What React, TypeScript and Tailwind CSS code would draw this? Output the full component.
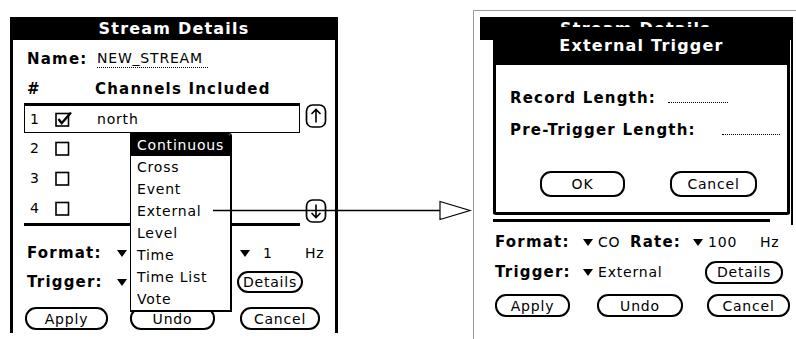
import React from "react";

const bold = "font-['DejaVu_Sans',sans-serif] font-bold text-[15px] tracking-[1.2px] leading-none";
const reg = "font-['DejaVu_Sans',sans-serif] text-[14px] tracking-[0.8px] leading-none";

const Tri = () => (
  <svg width="10" height="7" viewBox="0 0 10 7" className="shrink-0">
    <path d="M0 0h10L5 7z" fill="black" />
  </svg>
);

const Box = ({ checked }: { checked?: boolean }) => (
  <svg width="18" height="16" viewBox="0 0 18 16">
    <rect x="1" y="2.5" width="12.5" height="12.5" fill="none" stroke="black" strokeWidth="1.6" />
    {checked && <path d="M3.5 8l3.2 4.2L16 1.5" fill="none" stroke="black" strokeWidth="2.4" />}
  </svg>
);

const ScrollArrow = ({ up }: { up?: boolean }) => (
  <svg width="22" height="24" viewBox="0 0 22 24">
    <rect x="1.5" y="1" width="19" height="22" rx="6" fill="white" stroke="black" strokeWidth="1.7" />
    <path
      d={up ? "M11 5.5v13M6.5 10l4.5-4.5 4.5 4.5" : "M11 5.5v13M6.5 14l4.5 4.5 4.5-4.5"}
      fill="none"
      stroke="black"
      strokeWidth="1.6"
    />
  </svg>
);

const PalmButton = ({ label, className }: { label: string; className: string }) => (
  <div
    className={`flex shrink-0 items-center justify-center rounded-[11px] border-2 border-black bg-white ${reg} ${className}`}
  >
    {label}
  </div>
);

const triggers = ["Continuous", "Cross", "Event", "External", "Level", "Time", "Time List", "Vote"];

const channels = [
  { n: 1, name: "north", checked: true },
  { n: 2, name: "", checked: false },
  { n: 3, name: "", checked: false },
  { n: 4, name: "", checked: false },
];

const LeftScreen = () => (
  <div className="absolute left-[10px] top-[17px] h-[316px] w-[328px] border-x-[3px] border-black bg-white">
    <div className={`flex h-[23px] items-center justify-center bg-black text-white ${bold} text-[16px]`}>
      Stream Details
    </div>

    <div className="flex flex-col pl-[11px]">
      <div className="mt-[7px] flex h-[24px] items-center pl-[3px]">
        <span className={`w-[70px] ${bold}`}>Name:</span>
        <span className={`border-b border-dotted border-black pb-[2px] pr-[5px] ${reg}`}>NEW_STREAM</span>
      </div>

      <div className="mt-[6px] flex h-[24px] items-center pl-[3px]">
        <span className={`w-[68px] ${bold}`}>#</span>
        <span className={bold}>Channels Included</span>
      </div>

      <div className="mt-[2px] flex">
        <div className="w-[276px] border-b-[3px] border-t-[3px] border-black">
          {channels.map((c) => (
            <div
              key={c.n}
              className={`flex items-center ${
                c.n === 1 ? "h-[27px] border-x border-b border-black" : "h-[30px] border-x border-transparent"
              }`}
            >
              <span className={`w-[30px] pl-[5px] ${reg}`}>{c.n}</span>
              <span className="w-[42px]">
                <Box checked={c.checked} />
              </span>
              <span className={reg}>{c.name}</span>
            </div>
          ))}
        </div>
        <div className="ml-[5px] flex flex-col justify-between pb-[3px] pt-[1px]">
          <ScrollArrow up />
          <ScrollArrow />
        </div>
      </div>

      {/* the popup list hides the middle of these two rows */}
      <div className="mt-[15px] flex h-[24px] items-center pl-[3px]">
        <span className={`w-[90px] ${bold}`}>Format:</span>
        <Tri />
        <span className="w-[113px]" />
        <Tri />
        <span className={`ml-[13px] w-[42px] ${reg}`}>1</span>
        <span className={reg}>Hz</span>
      </div>

      <div className="mt-[5px] flex h-[24px] items-center pl-[3px]">
        <span className={`w-[90px] ${bold}`}>Trigger:</span>
        <Tri />
        <span className="w-[110px]" />
        <PalmButton label="Details" className="h-[22px] w-[66px]" />
      </div>

      <div className="mt-[13px] flex h-[23px] items-center">
        <PalmButton label="Apply" className="ml-[1px] h-[23px] w-[83px]" />
        <PalmButton label="Undo" className="ml-[22px] h-[23px] w-[85px]" />
        <PalmButton label="Cancel" className="ml-[25px] h-[23px] w-[80px]" />
      </div>
    </div>

    <div className="absolute left-[117px] top-[116px] w-[102px] rounded-tr-[3px] border-b-2 border-l border-r-2 border-t border-black bg-white">
      {triggers.map((t, i) => (
        <div
          key={t}
          className={`flex h-[22px] items-center pl-[6px] ${reg} ${i === 0 ? "rounded-tr-[2px] bg-black text-white" : ""}`}
        >
          {t}
        </div>
      ))}
    </div>
  </div>
);

const RightScreen = () => (
  <div className="absolute left-[473px] top-[10px] h-[329px] w-[323px] border-l border-t border-[#9a9a9a] bg-white">
    <div className="ml-[6px] mt-[6px] w-[313px]">
      <div className="border-r-2 border-black">
        <div className={`flex h-[23px] items-center justify-center bg-black text-white ${bold} text-[16px]`}>
          Stream Details
        </div>
        <div className="h-[179px]" />
        <div className="ml-[13px] h-[3px] w-[277px] bg-black" />
        <div className="h-[3px]" />
      </div>

      <div className="mt-[5px] flex h-[24px] items-center pl-[15px]">
        <span className={`w-[88px] ${bold}`}>Format:</span>
        <Tri />
        <span className={`ml-[5px] w-[32px] ${reg}`}>CO</span>
        <span className={`w-[63px] ${bold}`}>Rate:</span>
        <Tri />
        <span className={`ml-[5px] w-[52px] ${reg}`}>100</span>
        <span className={reg}>Hz</span>
      </div>

      <div className="mt-[6px] flex h-[24px] items-center pl-[15px]">
        <span className={`w-[88px] ${bold}`}>Trigger:</span>
        <Tri />
        <span className={`ml-[5px] w-[107px] ${reg}`}>External</span>
        <PalmButton label="Details" className="h-[23px] w-[78px]" />
      </div>

      <div className="mt-[10px] flex h-[23px] items-center pl-[15px]">
        <PalmButton label="Apply" className="h-[23px] w-[75px]" />
        <PalmButton label="Undo" className="ml-[27px] h-[23px] w-[86px]" />
        <PalmButton label="Cancel" className="ml-[24px] h-[23px] w-[83px]" />
      </div>
    </div>

    <div className="absolute left-[19px] top-[16px] w-[297px] rounded-t-[2px] rounded-b-[3px] border-x-[3px] border-b-[3px] border-black bg-white">
      <div className={`flex h-[38px] items-center justify-center bg-black text-white ${bold} text-[16px]`}>
        External Trigger
      </div>
      <div className="mt-[21px] flex h-[24px] items-center pl-[14px]">
        <span className={`w-[158px] ${bold}`}>Record Length:</span>
        <span className="mt-[8px] w-[60px] border-b border-dotted border-black" />
      </div>
      <div className="mt-[8px] flex h-[24px] items-center pl-[14px]">
        <span className={`w-[212px] ${bold}`}>Pre-Trigger Length:</span>
        <span className="mt-[8px] w-[58px] border-b border-dotted border-black" />
      </div>
      <div className="mb-[15px] mt-[29px] flex h-[26px] items-center pl-[44px]">
        <PalmButton label="OK" className="h-[26px] w-[85px]" />
        <PalmButton label="Cancel" className="ml-[45px] h-[26px] w-[87px]" />
      </div>
    </div>
  </div>
);

export default function App() {
  return (
    <div className="relative h-[339px] w-[796px] overflow-hidden bg-white">
      <LeftScreen />
      <RightScreen />
      <svg className="absolute left-0 top-0" width="796" height="339" viewBox="0 0 796 339">
        <path d="M213 210.5H440" stroke="black" strokeWidth="1.5" />
        <path d="M440 201.5L470 210.5 440 219.5z" fill="white" stroke="black" strokeWidth="1.2" />
      </svg>
    </div>
  );
}
